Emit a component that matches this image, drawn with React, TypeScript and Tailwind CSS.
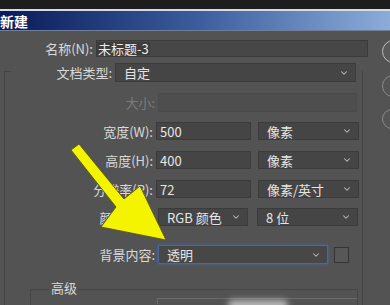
import React from 'react'
import { ChevronDown } from 'lucide-react'

const font = { fontFamily: '"Noto Sans CJK SC", "Liberation Sans", sans-serif' }

const Chev = () => <ChevronDown size={10} strokeWidth={2.5} className="text-[#bdbdbd] shrink-0" />

const Select = ({ value, w, h = 'h-[18px]', dim = false, focus = false }: { value: string; w: string; h?: string; dim?: boolean; focus?: boolean }) => (
  <div
    className={`${w} ${h} flex items-center justify-between pl-[8px] pr-[6px] border ${
      focus ? 'border-[#48679a] shadow-[0_0_3px_#3f6aa8] bg-[#474747]' : dim ? 'border-[#4a4a4a] bg-[#4e4e4e]' : 'border-[#3b3b3b] bg-[#454545]'
    }`}
  >
    <span className="text-[13px] leading-none text-[#e6e6e6]">{value}</span>
    {!dim ? <Chev /> : null}
  </div>
)

const Input = ({ value, w }: { value: string; w: string }) => (
  <div className={`${w} h-[18px] flex items-center pl-[3px] border border-[#3b3b3b] bg-[#454545]`}>
    <span className="text-[13px] leading-none text-[#e6e6e6]">{value}</span>
  </div>
)

const Label = ({ text, w, dim = false }: { text: string; w: string; dim?: boolean }) => (
  <div className={`${w} shrink-0 text-right text-[13px] leading-none pr-[3px] ${dim ? 'text-[#7c7c7c]' : 'text-[#d9d9d9]'}`}>{text}</div>
)

export default function App() {
  return (
    <div style={font} className="relative w-[390px] h-[305px] overflow-hidden bg-[#535353] flex flex-col">
      {/* window top */}
      <div className="h-[9px] bg-[#1d1d1d] shrink-0" />
      <div className="h-[2px] bg-[#d3dbe8] shrink-0" />
      <div className="h-[19px] shrink-0 flex items-center bg-gradient-to-r from-[#0b1a58] via-[#3b5c9c] to-[#8cadd9]">
        <span className="text-[14px] font-bold text-white leading-none">新建</span>
      </div>
      <div className="h-px bg-[#6f7f9a] shrink-0" />

      <div className="flex flex-1">
        {/* form */}
        <div className="w-[382px] shrink-0 flex flex-col">
          <div className="mt-[9px] flex items-center">
            <Label text="名称(N):" w="w-[96px]" />
            <div className="w-[272px] h-[17px] flex items-center border border-[#3b3b3b] bg-[#474747]">
              <span className="text-[13px] leading-none text-[#ececec] bg-[#3c3c3c] px-px">未标题-3</span>
            </div>
          </div>

          <div className="mt-[6px] flex items-center">
            <Label text="文档类型:" w="w-[115px]" />
            <Select value="自定" w="w-[241px]" h="h-[19px]" />
          </div>

          {/* size group */}
          <div className="-mt-[11px] ml-[4px] w-[359px] flex-1 border-l border-r border-[#434343] flex flex-col">
            <div className="w-[6px] h-px bg-[#434343]" />
            <div className="mt-[21px] flex items-center">
              <Label text="大小:" w="w-[153px]" dim />
              <Select value="" w="w-[199px]" h="h-[19px]" dim />
            </div>

            <div className="mt-[10px] flex items-center gap-[7px]">
              <div className="flex items-center">
                <Label text="宽度(W):" w="w-[151px]" />
                <Input value="500" w="w-[95px]" />
              </div>
              <Select value="像素" w="w-[101px]" />
            </div>

            <div className="mt-[11px] flex items-center gap-[7px]">
              <div className="flex items-center">
                <Label text="高度(H):" w="w-[151px]" />
                <Input value="400" w="w-[95px]" />
              </div>
              <Select value="像素" w="w-[101px]" />
            </div>

            <div className="mt-[11px] flex items-center gap-[7px]">
              <div className="flex items-center">
                <Label text="分辨率(R):" w="w-[151px]" />
                <Input value="72" w="w-[95px]" />
              </div>
              <Select value="像素/英寸" w="w-[101px]" />
            </div>

            <div className="mt-[10px] flex items-center gap-[9px]">
              <div className="flex items-center">
                <Label text="颜色模式:" w="w-[153px]" />
                <Select value="RGB 颜色" w="w-[90px]" />
              </div>
              <Select value="8 位" w="w-[101px]" />
            </div>

            <div className="mt-[19px] flex items-center gap-[6px]">
              <div className="flex items-center">
                <Label text="背景内容:" w="w-[153px]" />
                <Select value="透明" w="w-[170px]" h="h-[19px]" focus />
              </div>
              <div className="w-[15px] h-[16px] border border-[#343434] bg-[#575757]" />
            </div>

            {/* advanced group */}
            <div className="mt-[25px] ml-[25px] w-[328px] flex-1 border-l border-r border-t border-[#454545] flex flex-col">
              <div className="-mt-[9px] ml-[19px] px-[1px] bg-[#535353] self-start text-[13px] leading-none text-[#d9d9d9]">高级</div>
              <div className="mt-[4px] ml-[126px] w-[200px] h-[6px] border-t border-l border-[#6a6a6a] relative">
                <div className="absolute left-[70px] top-[1px] w-[60px] h-[10px] rounded-full bg-white/60 blur-[3px]" />
              </div>
            </div>
          </div>
        </div>

        {/* dialog buttons */}
        <div className="flex flex-col gap-[12px] mt-[9px]">
          <div className="w-[60px] h-[23px] rounded-full border border-[#bcbcbc] bg-[#5a5a5a]" />
          <div className="w-[60px] h-[22px] rounded-full border border-[#8a8a8a] bg-[#555555]" />
          <div className="w-[60px] h-[20px] rounded-full border border-[#8a8a8a] bg-[#555555]" />
        </div>
      </div>

      {/* annotation arrow */}
      <svg className="absolute left-0 top-0 pointer-events-none" width="390" height="305" viewBox="0 0 390 305">
        <g fill="#f4f400" stroke="#5d5d1c" strokeWidth="1" strokeLinejoin="round">
          <path d="M71 150 L79 144 L124 199 L140 186 L166 240 L101 227 L116 207 Z" />
        </g>
      </svg>
    </div>
  )
}
